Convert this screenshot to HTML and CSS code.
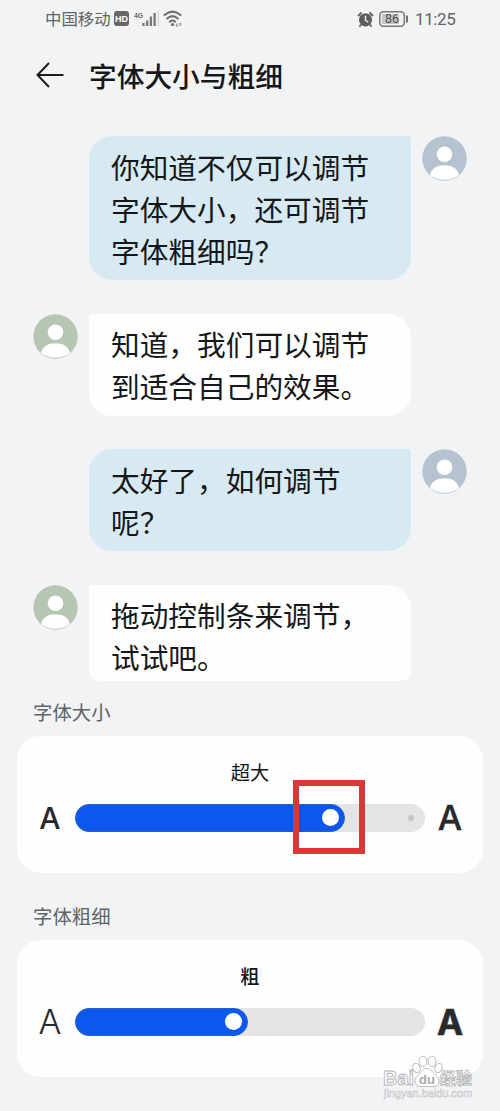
FILE: index.html
```html
<!DOCTYPE html>
<html lang="zh-CN">
<head>
<meta charset="utf-8">
<title>字体大小与粗细</title>
<link rel="stylesheet" href="styles.css">
</head>
<body>
<svg class="defs" width="0" height="0">
  <symbol id="person" viewBox="0 0 45 45">
    <circle cx="22.5" cy="22.5" r="22.2" fill="currentColor"/>
    <circle cx="22.5" cy="18.2" r="7.8" fill="#fff"/>
    <path d="M8 39C9.500 32.500 15 29.300 22.500 29.300S35.500 32.500 37 39C33 42.200 28 43.800 22.500 43.800S12 42.200 8 39Z" fill="#fff"/>
  </symbol>
</svg>
<header class="status">
  <span class="carrier">中国移动</span>
  <svg class="hd" width="15" height="15" viewBox="0 0 15 15"><rect width="15" height="15" rx="3" fill="#666769"/><text x="7.500" y="11" text-anchor="middle" class="hd-text">HD</text></svg>
  <svg class="signal" width="25" height="17" viewBox="0 0 25 17"><text x="0" y="7.500" class="net-text" textLength="9" lengthAdjust="spacingAndGlyphs">4G</text><path d="M9.500 13v3M13.200 10.500v5.500M16.900 6.500v9.500M20.600 3v13" stroke="#77787a" stroke-width="2.300" fill="none"/><path d="M24.300 1v15" stroke="#c9cacc" stroke-width="1"/></svg>
  <svg class="wifi" width="20" height="17" viewBox="0 0 20 17"><g fill="none" stroke="#6d6e70" stroke-width="2" stroke-linecap="round"><path d="M1.500 5Q9.500-1.800 17.500 5M4.200 8.500Q9.500 3.800 14.800 8.500M6.800 11.700Q9.500 9.400 12.200 11.700"/></g><circle cx="9.500" cy="14.500" r="1.600" fill="#6d6e70"/><path d="M14 13.500v3l-1.300-1.300M17 16v-3l1.300 1.300" stroke="#77787a" fill="none"/></svg>
  <span class="grow"></span>
  <svg class="alarm" width="17" height="17" viewBox="0 0 17 17"><circle cx="8.500" cy="8.800" r="6.600" fill="#5c5d5f"/><path d="M1 5L4.500 1.500M16 5L12.500 1.500M4 13.500L2.500 15.700M13 13.500l1.500 2.200" stroke="#66676a" stroke-width="1.900"/><path d="M8.500 4.800v4.400l2.800 2" fill="none" stroke="#f1f3f4" stroke-width="1.400"/></svg>
  <svg class="battery" width="29" height="16" viewBox="0 0 29 16"><rect x=".8" y=".8" width="24.500" height="14.400" rx="3.500" fill="none" stroke="#77787a" stroke-width="1.500"/><rect x="3" y="3" width="17" height="10" rx="1" fill="#c4c5c6"/><path d="M28 4.500v7" stroke="#66676a" stroke-width="1.800"/><text x="13" y="12.300" text-anchor="middle" class="battery-text">86</text></svg>
  <span class="time">11:25</span>
</header>
<div class="titlebar">
  <svg width="28" height="26" viewBox="0 0 28 26" fill="none" stroke="#1b1c1e" stroke-width="2"><path d="M27.500 13H1.500M13 1L1.500 13L13 25"/></svg>
  <h1>字体大小与粗细</h1>
</div>
<main class="chat">
  <div class="row sent"><p class="bubble">你知道不仅可以调节<br>字体大小，还可调节<br>字体粗细吗？</p><svg class="avatar"><use href="#person"/></svg></div>
  <div class="row"><svg class="avatar"><use href="#person"/></svg><p class="bubble">知道，我们可以调节<br>到适合自己的效果。</p></div>
  <div class="row sent"><p class="bubble">太好了，如何调节<br>呢？</p><svg class="avatar"><use href="#person"/></svg></div>
  <div class="row last"><svg class="avatar"><use href="#person"/></svg><p class="bubble">拖动控制条来调节，<br>试试吧。</p></div>
</main>
<section class="setting">
  <h2>字体大小</h2>
  <div class="card">
    <div class="value">超大</div>
    <div class="control">
      <span class="letter small">A</span>
      <div class="track size-track"><div class="fill size-fill"><i class="knob"></i></div><i class="dot"></i></div>
      <span class="letter large">A</span>
    </div>
    <div class="highlight"></div>
  </div>
</section>
<section class="setting">
  <h2>字体粗细</h2>
  <div class="card">
    <div class="value strong">粗</div>
    <div class="control">
      <span class="letter light">A</span>
      <div class="track"><div class="fill weight-fill"><i class="knob"></i></div></div>
      <span class="letter heavy">A</span>
    </div>
  </div>
</section>
<svg class="watermark" width="96" height="56" viewBox="0 0 96 56">
  <g fill="#fff" stroke="#bbbcbe" stroke-width="1">
    <ellipse cx="35.500" cy="20" rx="3.600" ry="4.700" transform="rotate(-20 35.500 20)"/>
    <ellipse cx="42" cy="13.500" rx="3.900" ry="5.300"/>
    <ellipse cx="51" cy="13.500" rx="3.900" ry="5.300"/>
    <ellipse cx="57.500" cy="20" rx="3.600" ry="4.700" transform="rotate(20 57.500 20)"/>
    <path d="M46 20.500C41 20.500 40 25 36 28.500C32 33 34 38.500 40 38.500H52C58 38.500 60 33 56 28.500C52 25 51 20.500 46 20.500Z"/>
  </g>
  <text x="2" y="37" class="mark-main" textLength="31" lengthAdjust="spacingAndGlyphs">Bai</text>
  <text x="46" y="35.500" text-anchor="middle" class="mark-du">du</text>
  <text x="59" y="36" class="mark-cn" textLength="32">经验</text>
  <text x="3" y="49" class="mark-url" textLength="88" lengthAdjust="spacingAndGlyphs">jingyan.baidu.com</text>
</svg>
</body>
</html>
```
FILE: styles.css
```css
* { box-sizing: border-box; }
body {
  margin: 0;
  width: 500px;
  height: 1111px;
  overflow: hidden;
  position: relative;
  background: #f1f3f5;
  color: #151719;
  font-family: "Noto Sans CJK SC", sans-serif;
}
h1, h2, p { margin: 0; font-weight: 400; }
.defs { position: absolute; }
.status {
  height: 38px;
  padding: 0 44px 0 45px;
  display: flex;
  align-items: center;
  color: #626365;
  font-size: 16.4px;
}
.grow { flex: 1; }
.carrier { width: 69px; margin-top: -2px; white-space: nowrap; }
.hd { margin-top: -1px; }
.signal { margin-left: 5px; margin-top: -1px; }
.wifi { margin-left: 4px; margin-top: -2px; }
.alarm { margin-right: 5px; }
.battery { margin-right: 7px; margin-top: -1px; }
.time { width: 41px; font-family: Roboto, sans-serif; font-size: 17px; letter-spacing: -.4px; white-space: nowrap; }
.hd-text { font: bold 9px "Liberation Sans", sans-serif; fill: #fff; }
.net-text { font: bold 8px "Liberation Sans", sans-serif; fill: #666769; }
.battery-text { font: 12.500px Roboto, sans-serif; fill: #4c4d4f; }
.titlebar {
  height: 98px;
  padding: 24px 0 0 36px;
  display: flex;
  align-items: flex-start;
  gap: 25px;
}
.titlebar h1 { margin-top: -1px; font-size: 27.7px; line-height: 28px; font-weight: 500; }
.chat { display: flex; flex-direction: column; gap: 33.500px; }
.row { display: flex; align-items: flex-start; gap: 11px; padding-left: 33px; color: #b7c6b2; }
.row.sent { padding-left: 89px; color: #b5c3d0; }
.avatar { width: 45px; height: 45px; flex: none; }
.bubble {
  width: 322px;
  padding: 9px 0 9px 22px;
  border-radius: 4px 23px 23px 23px;
  background: #fefefe;
  color: #151719;
  font-size: 28.7px;
  line-height: 42px;
  white-space: nowrap;
}
.sent .bubble { padding: 10px 0 8px 22px; background: #d7e9f3; border-radius: 23px 4px 23px 23px; }
.last .bubble { height: 96px; border-radius: 4px 23px 10px 10px; }
.setting { padding: 0 17px; }
.setting h2 {
  height: 55px;
  padding: 16px 0 0 16px;
  font-size: 19.4px;
  line-height: 30px;
  color: #626466;
}
.setting + .setting h2 { height: 67px; padding-top: 28px; }
.card { position: relative; height: 137px; background: #fefefe; border-radius: 24px; }
.value { padding-top: 21px; text-align: center; font-size: 19.3px; line-height: 30px; }
.value.strong { font-weight: 500; }
.control { display: flex; align-items: center; height: 28px; margin-top: 17px; }
.letter { width: 58px; text-align: center; padding: 1px 0 0 8px; font-family: Inter, sans-serif; color: #292a2c; line-height: 28px; }
.letter.small { font-size: 30px; font-weight: 500; }
.letter.large { font-size: 34.5px; font-weight: 500; padding: 1px 8px 0 0; -webkit-text-stroke: .35px #292a2c; }
.letter.light { font-size: 34px; font-weight: 300; }
.letter.heavy { font-size: 35px; font-weight: 700; padding: 1px 8px 0 0; -webkit-text-stroke: .6px #292a2c; }
.track { display: flex; align-items: center; justify-content: space-between; width: 350px; height: 28px; border-radius: 14px; background: #e4e4e4; }
.size-track { padding-right: 11px; }
.fill { display: flex; align-items: center; justify-content: flex-end; height: 28px; padding-right: 5px; border-radius: 14px; background: #0c57ee; border: 1px solid #2560c4; }
.size-fill { width: 270px; }
.weight-fill { width: 173px; }
.knob { width: 17px; height: 17px; border-radius: 50%; background: #fff; }
.dot { width: 6px; height: 6px; border-radius: 50%; background: #c5c5c5; }
.highlight { position: absolute; left: 276px; top: 44px; width: 72px; height: 74px; border: 6px solid #d53a37; }
.watermark { position: absolute; left: 381px; top: 1048px; }
.mark-main { font: bold 21px "Liberation Sans", sans-serif; fill: #fff; stroke: #b4b5b7; stroke-width: .9px; }
.mark-du { font: bold 13px "Liberation Sans", sans-serif; fill: #a9aaac; }
.mark-cn { font: bold 16px "Noto Sans CJK SC", sans-serif; fill: #fff; stroke: #b1b2b4; stroke-width: .8px; }
.mark-url { font: 10.500px "Liberation Sans", sans-serif; fill: #fff; stroke: #c8c9cb; stroke-width: .6px; }
```
